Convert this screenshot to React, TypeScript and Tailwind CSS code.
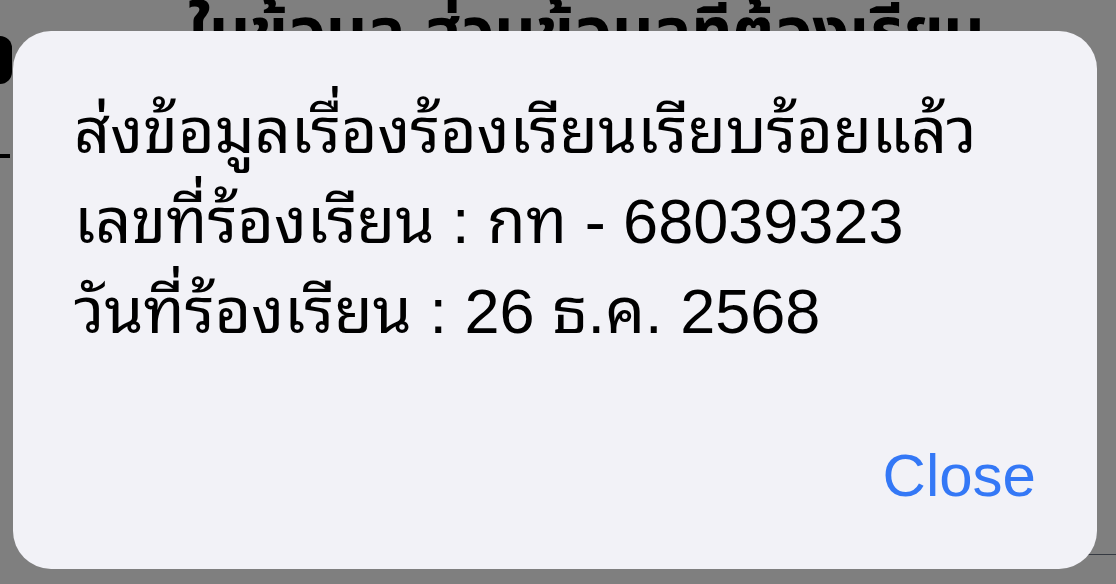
const thai = "font-['Liberation_Sans','Noto_Sans_Thai_Looped','Noto_Sans_Thai','Noto_Sans',sans-serif]";

function BackgroundPage() {
  return (
    <div className="flex flex-col">
      <div className="-mt-[14px] ml-[188px] whitespace-nowrap text-[64px] font-bold leading-[90px] text-black">
        ใบข้อมูล ส่วนข้อมูลที่ต้องเรียน
      </div>
      <div className="-ml-[30px] -mt-[40px] h-[48px] w-[42px] rounded-[12px] bg-black" />
      <div className="mt-[70px] flex">
        <div className="h-[4px] w-[10px] bg-black" />
      </div>
      <div className="mt-[396px] flex justify-end">
        <div className="w-[190px] border-t border-gray-500" />
      </div>
    </div>
  );
}

function AlertDialog() {
  return (
    <div className="flex h-[538px] w-[1084px] flex-col justify-between rounded-[38px] bg-[#f2f2f7] pt-[55px] pr-[61px] pb-[58px] pl-[61px]">
      <div className={`${thai} text-[63px] leading-[90px] text-black`}>
        <div>ส่งข้อมูลเรื่องร้องเรียนเรียบร้อยแล้ว</div>
        <div>เลขที่ร้องเรียน : กท - 68039323</div>
        <div>วันที่ร้องเรียน : 26 ธ.ค. 2568</div>
      </div>
      <div className="flex justify-end">
        <button className="font-['Liberation_Sans',sans-serif] text-[60px] leading-[70px] text-[#3478f6]">Close</button>
      </div>
    </div>
  );
}

export default function App() {
  return (
    <div className="relative h-[584px] w-[1116px] overflow-hidden bg-white font-['Liberation_Sans','Noto_Sans_Thai',sans-serif]">
      <BackgroundPage />
      <div className="absolute inset-0 bg-black/50 pt-[31px] pl-[13px]">
        <AlertDialog />
      </div>
    </div>
  );
}
